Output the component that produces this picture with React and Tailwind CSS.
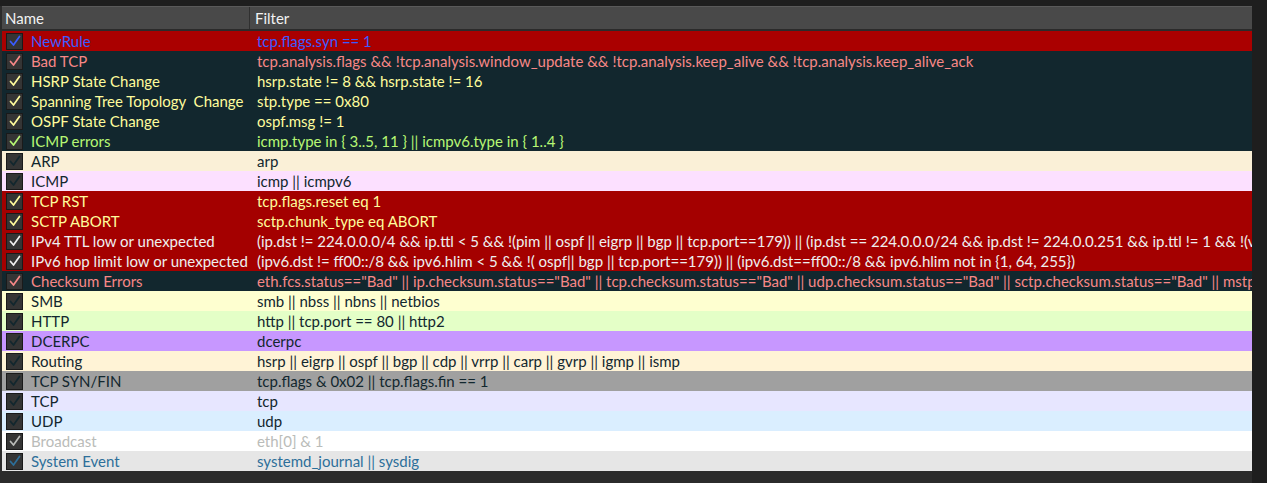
import React from "react";

const rows = [
  { n: "NewRule", f: "tcp.flags.syn == 1", bg: "#aa0000", fg: "#3a5cff" },
  { n: "Bad TCP", f: "tcp.analysis.flags && !tcp.analysis.window_update && !tcp.analysis.keep_alive && !tcp.analysis.keep_alive_ack", bg: "#12272e", fg: "#f78787" },
  { n: "HSRP State Change", f: "hsrp.state != 8 && hsrp.state != 16", bg: "#12272e", fg: "#fffc9c" },
  { n: "Spanning Tree Topology  Change", f: "stp.type == 0x80", bg: "#12272e", fg: "#fffc9c" },
  { n: "OSPF State Change", f: "ospf.msg != 1", bg: "#12272e", fg: "#fffc9c" },
  { n: "ICMP errors", f: "icmp.type in { 3..5, 11 } || icmpv6.type in { 1..4 }", bg: "#12272e", fg: "#b7f774" },
  { n: "ARP", f: "arp", bg: "#faf0d7", fg: "#12272e" },
  { n: "ICMP", f: "icmp || icmpv6", bg: "#fce0ff", fg: "#12272e" },
  { n: "TCP RST", f: "tcp.flags.reset eq 1", bg: "#a40000", fg: "#fffc9c" },
  { n: "SCTP ABORT", f: "sctp.chunk_type eq ABORT", bg: "#a40000", fg: "#fffc9c" },
  { n: "IPv4 TTL low or unexpected", f: "(ip.dst != 224.0.0.0/4 && ip.ttl < 5 && !(pim || ospf || eigrp || bgp || tcp.port==179)) || (ip.dst == 224.0.0.0/24 && ip.dst != 224.0.0.251 && ip.ttl != 1 && !(vrrp || carp))", bg: "#a40000", fg: "#efefef" },
  { n: "IPv6 hop limit low or unexpected", f: "(ipv6.dst != ff00::/8 && ipv6.hlim < 5 && !( ospf|| bgp || tcp.port==179)) || (ipv6.dst==ff00::/8 && ipv6.hlim not in {1, 64, 255})", bg: "#a40000", fg: "#efefef" },
  { n: "Checksum Errors", f: 'eth.fcs.status=="Bad" || ip.checksum.status=="Bad" || tcp.checksum.status=="Bad" || udp.checksum.status=="Bad" || sctp.checksum.status=="Bad" || mstp.checksum.status=="Bad" || cdp.checksum.status=="Bad"', bg: "#12272e", fg: "#f78787" },
  { n: "SMB", f: "smb || nbss || nbns || netbios", bg: "#feffd0", fg: "#12272e" },
  { n: "HTTP", f: "http || tcp.port == 80 || http2", bg: "#e4ffc7", fg: "#12272e" },
  { n: "DCERPC", f: "dcerpc", bg: "#c797ff", fg: "#12272e" },
  { n: "Routing", f: "hsrp || eigrp || ospf || bgp || cdp || vrrp || carp || gvrp || igmp || ismp", bg: "#fff3d6", fg: "#12272e" },
  { n: "TCP SYN/FIN", f: "tcp.flags & 0x02 || tcp.flags.fin == 1", bg: "#a0a0a0", fg: "#12272e" },
  { n: "TCP", f: "tcp", bg: "#e7e6ff", fg: "#12272e" },
  { n: "UDP", f: "udp", bg: "#daeeff", fg: "#12272e" },
  { n: "Broadcast", f: "eth[0] & 1", bg: "#ffffff", fg: "#babcb9" },
  { n: "System Event", f: "systemd_journal || sysdig", bg: "#e6e6e6", fg: "#2d6f9a" },
];

function Check({ color }) {
  return (
    <div className="w-[17px] h-[17px] shrink-0 border border-[#1a1a1a] bg-[#353535] flex items-center justify-center">
      <svg width="14" height="14" viewBox="0 0 14 14">
        <path d="M2.5 7.5 L5.5 11 L11.5 2.5" fill="none" stroke={color} strokeWidth="1.7" strokeLinecap="round" strokeLinejoin="round" />
      </svg>
    </div>
  );
}

export default function App() {
  return (
    <div
      className="w-[1267px] h-[483px] bg-[#1e1e1e] pt-[6px] overflow-hidden"
      style={{ fontFamily: "Lato, 'Noto Sans', sans-serif" }}
    >
      <div className="w-[1252px] h-[477px] bg-[#2b2b2b] pl-[2px] flex flex-col overflow-hidden">
        <div className="flex h-[23px] bg-[#494949] border-t border-[#5a5a5a] text-[#f2f2f2] text-[15px] leading-[22px] shrink-0">
          <div className="w-[248px] pl-[3px] border-r border-[#303030]">Name</div>
          <div className="pl-[5px]">Filter</div>
        </div>
        <div className="h-[2px] shrink-0" />
        {rows.map((r, i) => (
          <div
            key={i}
            className="flex h-[20px] shrink-0 items-center text-[15px] whitespace-pre overflow-hidden"
            style={{ backgroundColor: r.bg, color: r.fg }}
          >
            <div className="w-[248px] shrink-0 flex items-center pl-[4px] gap-[8px]">
              <Check color={r.fg} />
              <span>{r.n}</span>
            </div>
            <div className="pl-[6px] ml-[1px]">{r.f}</div>
          </div>
        ))}
      </div>
    </div>
  );
}
